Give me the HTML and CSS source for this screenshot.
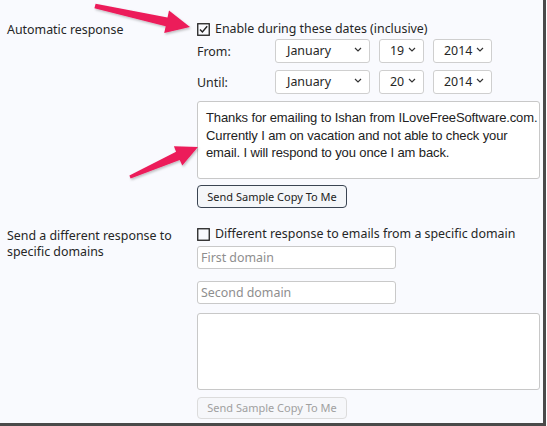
FILE: index.html
```html
<!DOCTYPE html>
<html>
<head>
<meta charset="utf-8">
<link rel="stylesheet" href="styles.css">
</head>
<body>
<div class="frame">
  <section class="row first">
    <div class="label">Automatic response</div>
    <div class="field">
      <label class="check">
        <svg class="box" width="13" height="13" viewBox="0 0 13 13"><rect x="0.75" y="0.75" width="11.5" height="11.5" fill="none" stroke="#222" stroke-width="1.3"/><path d="M3 6.5 L5.4 9 L10.2 3.2" fill="none" stroke="#222" stroke-width="1.4"/></svg>
        <span>Enable during these dates (inclusive)</span>
      </label>
      <div class="date-row">
        <span class="dlabel">From:</span>
        <div class="select month"><span>January</span><svg width="8" height="5" viewBox="0 0 8 5"><path d="M1 1 L4 4 L7 1" fill="none" stroke="#333" stroke-width="1.2"/></svg></div>
        <div class="select day"><span>19</span><svg width="8" height="5" viewBox="0 0 8 5"><path d="M1 1 L4 4 L7 1" fill="none" stroke="#333" stroke-width="1.2"/></svg></div>
        <div class="select year"><span>2014</span><svg width="8" height="5" viewBox="0 0 8 5"><path d="M1 1 L4 4 L7 1" fill="none" stroke="#333" stroke-width="1.2"/></svg></div>
      </div>
      <div class="date-row">
        <span class="dlabel">Until:</span>
        <div class="select month"><span>January</span><svg width="8" height="5" viewBox="0 0 8 5"><path d="M1 1 L4 4 L7 1" fill="none" stroke="#333" stroke-width="1.2"/></svg></div>
        <div class="select day"><span>20</span><svg width="8" height="5" viewBox="0 0 8 5"><path d="M1 1 L4 4 L7 1" fill="none" stroke="#333" stroke-width="1.2"/></svg></div>
        <div class="select year"><span>2014</span><svg width="8" height="5" viewBox="0 0 8 5"><path d="M1 1 L4 4 L7 1" fill="none" stroke="#333" stroke-width="1.2"/></svg></div>
      </div>
      <div class="textarea filled"><span class="line">Thanks for emailing to Ishan from ILoveFreeSoftware.com.</span><span class="line">Currently I am on vacation and not able to check your</span><span class="line">email. I will respond to you once I am back.</span></div>
      <div class="btn">Send Sample Copy To Me</div>
    </div>
  </section>
  <section class="row second">
    <div class="label">Send a different response to<br>specific domains</div>
    <div class="field">
      <label class="check">
        <svg class="box" width="13" height="13" viewBox="0 0 13 13"><rect x="0.75" y="0.75" width="11.5" height="11.5" fill="none" stroke="#222" stroke-width="1.3"/></svg>
        <span>Different response to emails from a specific domain</span>
      </label>
      <div class="input">First domain</div>
      <div class="input second-domain">Second domain</div>
      <div class="textarea empty"></div>
      <div class="btn disabled">Send Sample Copy To Me</div>
    </div>
  </section>
  <svg class="arrows" width="547" height="426" viewBox="0 0 547 426">
    <defs>
      <filter id="sh" x="-10%" y="-10%" width="130%" height="140%"><feDropShadow dx="1" dy="1.5" stdDeviation="1" flood-color="#000" flood-opacity="0.25"/></filter>
    </defs>
    <polygon filter="url(#sh)" fill="#ec1b5a" points="95.6,3.8 167.5,17.4 169.0,10.6 190,27 164.2,33 165.7,26.2 94.4,8.2"/>
    <polygon filter="url(#sh)" fill="#ec1b5a" points="129.4,175.6 176.1,151.8 173.9,146.3 198,147 182.3,165.6 179.7,160.1 130.6,178.6"/>
  </svg>
</div>
</body>
</html>
```
FILE: styles.css
```css
html, body {
  margin: 0;
  padding: 0;
  background: #ffffff;
}
.frame {
  position: relative;
  width: 543px;
  height: 423px;
  background: #f9fafe;
  border-right: 3px solid #4a4a4a;
  border-bottom: 3px solid #4a4a4a;
  font-family: "Noto Sans", "Open Sans", sans-serif;
  font-size: 12.4px;
  color: #262626;
  overflow: hidden;
}
.row {
  display: grid;
  grid-template-columns: 197px 343px;
}
.row.first { padding-top: 21px; }
.row.second { padding-top: 18px; }
.label {
  padding-left: 7px;
  line-height: 16px;
  padding-top: 1px;
}
.second .label { padding-top: 2px; }
.field {
  display: flex;
  flex-direction: column;
  align-items: flex-start;
}
.check {
  display: flex;
  align-items: center;
  gap: 5px;
  height: 16px;
  line-height: 16px;
  white-space: nowrap;
}
.check .box { flex: none; }
.date-row {
  display: flex;
  align-items: center;
  height: 24px;
  margin-top: 2px;
}
.date-row + .date-row { margin-top: 7px; }
.dlabel { width: 78px; }
.select {
  box-sizing: border-box;
  height: 24px;
  border: 1px solid #cfcfcf;
  border-radius: 3px;
  background: #fff;
  display: flex;
  align-items: center;
  justify-content: space-between;
  padding: 0 7px 2px 11px;
  margin-right: 9px;
}
.select svg { margin-top: -2px; }
.month { width: 95px; }
.day { width: 45px; padding-left: 10px; }
.year { width: 59px; padding-left: 10px; }
.textarea {
  box-sizing: border-box;
  width: 343px;
  background: #fff;
  border: 1px solid #c8c8c8;
  border-radius: 3px;
}
.textarea.filled {
  height: 78px;
  margin-top: 7px;
  padding: 7px 0 0 8px;
  font-family: "Liberation Sans", Arial, sans-serif;
  font-size: 13px;
  line-height: 17.5px;
  color: #222;
}
.line {
  display: block;
  white-space: nowrap;
  letter-spacing: -0.12px;
}
.btn {
  box-sizing: border-box;
  width: 150px;
  height: 23px;
  margin-top: 6px;
  border: 1px solid #3a4452;
  border-radius: 4px;
  background: #f4f6f9;
  font-size: 11px;
  line-height: 21px;
  text-align: center;
  color: #222;
}
.btn.disabled {
  height: 22px;
  margin-top: 7px;
  border-color: #dcdcdc;
  color: #a0a0a0;
  background: #f6f7fa;
  line-height: 20px;
}
.input {
  box-sizing: border-box;
  width: 199px;
  height: 23px;
  margin-top: 4px;
  border: 1px solid #c9c9c9;
  border-radius: 3px;
  background: #fff;
  color: #8e8e8e;
  padding-left: 3px;
  line-height: 21px;
}
.input.second-domain { margin-top: 12px; }
.textarea.empty {
  height: 77px;
  margin-top: 9px;
}
.arrows {
  position: absolute;
  left: 0;
  top: 0;
  pointer-events: none;
}
```
